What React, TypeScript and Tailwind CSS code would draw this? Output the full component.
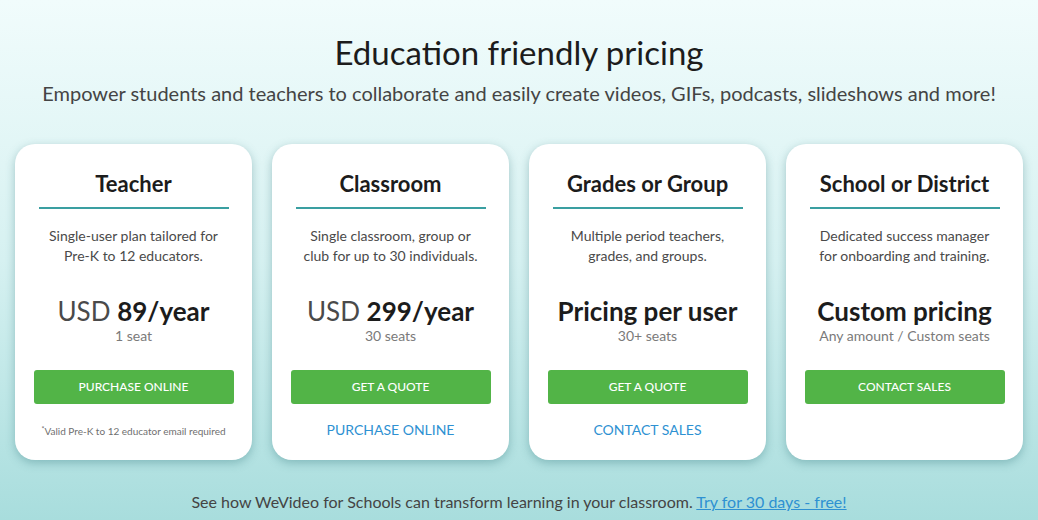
import React from "react";

type Plan = {
  title: string;
  desc: [string, string];
  priceKind: "usd" | "text";
  price: string;
  seats: string;
  button: string;
  link?: string;
  note?: string;
};

const plans: Plan[] = [
  {
    title: "Teacher",
    desc: ["Single-user plan tailored for", "Pre-K to 12 educators."],
    priceKind: "usd",
    price: "89/year",
    seats: "1 seat",
    button: "PURCHASE ONLINE",
    note: "Valid Pre-K to 12 educator email required",
  },
  {
    title: "Classroom",
    desc: ["Single classroom, group or", "club for up to 30 individuals."],
    priceKind: "usd",
    price: "299/year",
    seats: "30 seats",
    button: "GET A QUOTE",
    link: "PURCHASE ONLINE",
  },
  {
    title: "Grades or Group",
    desc: ["Multiple period teachers,", "grades, and groups."],
    priceKind: "text",
    price: "Pricing per user",
    seats: "30+ seats",
    button: "GET A QUOTE",
    link: "CONTACT SALES",
  },
  {
    title: "School or District",
    desc: ["Dedicated success manager", "for onboarding and training."],
    priceKind: "text",
    price: "Custom pricing",
    seats: "Any amount / Custom seats",
    button: "CONTACT SALES",
  },
];

function Card({ p }: { p: Plan }) {
  return (
    <div className="flex h-[316px] w-[237px] flex-col items-center rounded-[20px] bg-white px-[19px] pt-[26px] shadow-[0_3px_10px_rgba(40,110,115,0.35)]">
      <div className="text-[22px] font-bold leading-[28px] text-[#1c1c1c]">{p.title}</div>
      <div className="mt-[9px] h-[2px] w-[190px] bg-[#3a9fa1]" />
      <div className="mt-[17px] text-center text-[14px] leading-[19.5px] text-[#4a4a4a]">
        <div>{p.desc[0]}</div>
        <div>{p.desc[1]}</div>
      </div>
      <div className="mt-[30px] text-[26px] leading-[32px] text-[#1c1c1c]">
        {p.priceKind === "usd" ? (
          <>
            <span className="font-normal text-[#4a4a4a]">USD </span>
            <span className="font-bold">{p.price}</span>
          </>
        ) : (
          <span className="font-bold">{p.price}</span>
        )}
      </div>
      <div className="text-[14px] leading-[18px] text-[#7a7a7a]">{p.seats}</div>
      <div className="mt-[25px] flex h-[34px] w-[200px] items-center justify-center rounded-[3px] bg-[#52b447] text-[12px] font-medium text-white">
        {p.button}
      </div>
      {p.link && (
        <div className="mt-[17px] text-[14px] leading-[18px] text-[#2e91d2]">{p.link}</div>
      )}
      {p.note && (
        <div className="mt-[20px] text-[10px] leading-[14px] text-[#6f6f6f]">
          <sup className="text-[7px]">*</sup>
          {p.note}
        </div>
      )}
    </div>
  );
}

export default function App() {
  return (
    <div
      className="flex h-[520px] w-[1038px] flex-col items-center overflow-hidden bg-gradient-to-b from-[#f1fcfc] via-[#d6f1f1] to-[#a8dddd]"
      style={{ fontFamily: "Lato, 'Open Sans', sans-serif" }}
    >
      <h1 className="mt-[32px] text-[33px] font-normal leading-[40px] text-[#1c1c1c]">
        Education friendly pricing
      </h1>
      <p className="mt-[8px] text-[20px] leading-[26px] text-[#444]">
        Empower students and teachers to collaborate and easily create videos, GIFs, podcasts,
        slideshows and more!
      </p>
      <div className="mt-[38px] flex gap-[20px]">
        {plans.map((p) => (
          <Card key={p.title} p={p} />
        ))}
      </div>
      <p className="mt-[32px] text-[16px] leading-[20px] text-[#444]">
        See how WeVideo for Schools can transform learning in your classroom.{" "}
        <span className="text-[#2e91d2] underline">Try for 30 days - free!</span>
      </p>
    </div>
  );
}
